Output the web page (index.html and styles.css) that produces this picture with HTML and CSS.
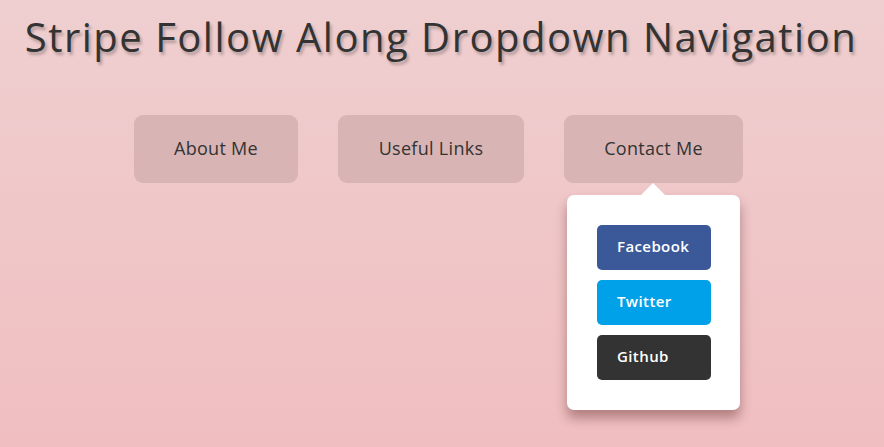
FILE: index.html
```html
<!DOCTYPE html>
<html>
<head>
<meta charset="utf-8">
<link rel="stylesheet" href="styles.css">
</head>
<body>
<h1 class="title">Stripe Follow Along Dropdown Navigation</h1>
<nav class="nav">
  <ul class="menu">
    <li class="item item-about"><a class="item-link">About Me</a></li>
    <li class="item item-links"><a class="item-link">Useful Links</a></li>
    <li class="item item-contact">
      <a class="item-link">Contact Me</a>
      <div class="dropdown">
        <a class="social facebook">Facebook</a>
        <a class="social twitter">Twitter</a>
        <a class="social github">Github</a>
      </div>
    </li>
  </ul>
</nav>
</body>
</html>
```
FILE: styles.css
```css
html, body {
  margin: 0;
  height: 100%;
}
body {
  background: linear-gradient(to bottom, #efcfd0 0%, #f0bec0 100%);
  font-family: "Open Sans", "DejaVu Sans", sans-serif;
  color: #333;
  overflow: hidden;
}
.title {
  margin: 0;
  padding-top: 12px;
  padding-right: 2px;
  text-align: center;
  font-size: 40px;
  font-weight: 500;
  letter-spacing: 1.5px;
  color: #333;
  text-shadow: 2px 3px 3px rgba(0, 0, 0, 0.25);
  line-height: 50px;
}
.nav {
  margin-top: 53px;
}
.menu {
  list-style: none;
  margin: 0;
  padding: 0;
  display: flex;
  justify-content: center;
  gap: 40px;
  padding-right: 7px;
}
.item {
  position: relative;
}
.item-link {
  display: flex;
  align-items: center;
  justify-content: center;
  box-sizing: border-box;
  height: 68px;
  padding-bottom: 3px;
  border-radius: 9px;
  background: #d8b5b4;
  font-size: 18px;
  letter-spacing: 0.3px;
  color: #333;
}
.item-about .item-link { width: 164px; }
.item-links .item-link { width: 186px; }
.item-contact .item-link { width: 179px; }
.dropdown {
  position: absolute;
  top: 80px;
  left: 3px;
  width: 173px;
  box-sizing: border-box;
  padding: 30px 29px 30px 30px;
  background: #fff;
  border-radius: 7px;
  box-shadow: 0 8px 12px rgba(80, 30, 30, 0.4);
  display: flex;
  flex-direction: column;
  gap: 10px;
}
.dropdown::before {
  content: "";
  position: absolute;
  top: -12px;
  left: 74px;
  border-left: 12px solid transparent;
  border-right: 12px solid transparent;
  border-bottom: 12px solid #fff;
}
.social {
  display: flex;
  align-items: center;
  box-sizing: border-box;
  height: 45px;
  padding-left: 20px;
  padding-bottom: 3px;
  border-radius: 5px;
  color: #fff;
  font-size: 15px;
  font-weight: 600;
  letter-spacing: 0.4px;
}
.facebook { background: #3b5998; }
.twitter { background: #00a1e9; }
.github { background: #333; }
```
